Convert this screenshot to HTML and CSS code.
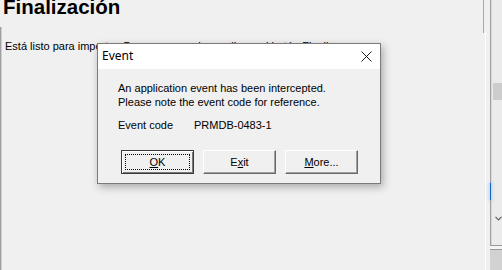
FILE: index.html
```html
<!DOCTYPE html>
<html lang="es">
<head>
<meta charset="utf-8">
<title>Finalización</title>
<link rel="stylesheet" href="styles.css">
</head>
<body>
<div class="screen">
  <div class="main">
    <h1 class="title">Finalización</h1>
    <div class="panel">
      <p class="intro">Está listo para importar. Para empezar, haga clic en el botón Finalizar.</p>
    </div>
  </div>
  <div class="edge">
    <div class="edge-line"></div>
    <div class="edge-gap1"></div>
    <div class="edge-white"></div>
    <div class="edge-gap2"></div>
    <div class="scroll">
      <div class="scroll-track">
        <div class="rail">
          <div class="rail-gray rail-top"></div>
          <div class="rail-blue"></div>
          <div class="rail-gray rail-bottom"></div>
        </div>
        <div class="scroll-inner">
          <div class="thumb"></div>
          <svg class="chev" width="7" height="5" viewBox="0 0 7 5"><path d="M0.5 0.8 L3.5 3.8 L6.5 0.8" fill="none" stroke="#606060" stroke-width="1.2"/></svg>
        </div>
      </div>
      <div class="scroll-foot"></div>
    </div>
  </div>

  <div class="dialog" role="dialog" aria-label="Event">
    <div class="dlg-title">
      <span class="dlg-caption">Event</span>
      <svg class="close" width="11" height="11" viewBox="0 0 11 11"><path d="M0.5 0.5 L10.5 10.5 M10.5 0.5 L0.5 10.5" stroke="#1a1a1a" stroke-width="1" fill="none"/></svg>
    </div>
    <div class="dlg-body">
      <p class="msg">An application event has been intercepted.<br>Please note the event code for reference.</p>
      <div class="code-row"><span class="code-label">Event code</span><span class="code-value">PRMDB-0483-1</span></div>
      <div class="buttons">
        <button class="btn btn-default"><span class="focus"><u>O</u>K</span></button>
        <button class="btn"><span class="btn-label">E<u>x</u>it</span></button>
        <button class="btn"><span class="btn-label"><u>M</u>ore...</span></button>
      </div>
    </div>
  </div>
</div>
</body>
</html>
```

FILE: styles.css
```css
html, body {
  margin: 0;
  padding: 0;
}
body {
  background: #f0f0f0;
  font-family: "Liberation Sans", Arial, sans-serif;
  color: #000;
}
.screen {
  position: relative;
  width: 502px;
  height: 270px;
  overflow: hidden;
  display: flex;
  background: #f0f0f0;
}
.main {
  width: 483px;
  display: flex;
  flex-direction: column;
}
.title {
  margin: -3px 0 0 0;
  padding-left: 3px;
  font-size: 20.5px;
  line-height: 20px;
  font-weight: bold;
  height: 30px;
}
.panel {
  flex: 1;
  border-left: 1px solid #a0a0a0;
  box-shadow: inset 1px 0 #cfcfcf;
  padding: 12px 0 0 4px;
}
.intro {
  margin: 0;
  font-size: 11px;
  line-height: 14px;
  white-space: nowrap;
}

/* right edge decoration */
.edge {
  width: 19px;
  display: flex;
}
.edge-line {
  width: 1px;
  height: 33px;
  background: #a8a8a8;
}
.edge-gap1 { width: 1px; }
.edge-white {
  width: 1px;
  margin-top: 31px;
  background: #ffffff;
}
.edge-gap2 { width: 4px; }
.scroll {
  width: 12px;
  display: flex;
  flex-direction: column;
}
.scroll-track {
  height: 245px;
  display: flex;
  background: #ebebeb;
}
.rail {
  width: 1px;
  display: flex;
  flex-direction: column;
}
.rail-gray { background: #a0a0a0; }
.rail-top { height: 183px; }
.rail-blue {
  height: 17px;
  background: #1565c0;
  box-shadow: 0 0 3px 1px rgba(80, 160, 240, 0.35);
}
.rail-bottom { flex: 1; }
.scroll-inner {
  flex: 1;
  display: flex;
  flex-direction: column;
  border-left: 1px solid #d8d8d8;
}
.thumb {
  margin: 83px 0 0 1px;
  height: 17px;
  background: #cdcdcd;
}
.chev {
  margin: 116px 0 0 3px;
}
.scroll-foot {
  flex: 1;
  border-top: 1px solid #9a9a9a;
  background: linear-gradient(#f4f4f4 0, #f4f4f4 3px, #9a9a9a 3px, #9a9a9a 4px, #d2d2d2 4px);
}

/* dialog */
.dialog {
  position: absolute;
  left: 97px;
  top: 43px;
  width: 284px;
  height: 141px;
  box-sizing: border-box;
  border: 1px solid #7a7a7a;
  background: #f0f0f0;
  box-shadow: 2px 3px 8px rgba(0, 0, 0, 0.3);
  display: flex;
  flex-direction: column;
}
.dlg-title {
  height: 25px;
  background: #ffffff;
  display: flex;
  align-items: center;
  justify-content: space-between;
  padding: 0 8px 0 4px;
}
.dlg-caption {
  font-family: "Noto Sans", "Open Sans", sans-serif;
  font-size: 12px;
  line-height: 14px;
  margin-top: -2px;
}
.dlg-body {
  flex: 1;
  padding: 12px 0 0 20px;
  font-size: 11px;
  line-height: 14px;
}
.msg {
  margin: 0;
}
.code-row {
  margin-top: 9px;
  display: flex;
}
.code-label {
  width: 76px;
}
.buttons {
  margin: 18px 0 0 3px;
  display: flex;
  gap: 9px;
}
.btn {
  width: 73px;
  height: 24px;
  box-sizing: border-box;
  padding: 0;
  margin: 0;
  font-family: "Liberation Sans", Arial, sans-serif;
  font-size: 11px;
  color: #000;
  background: #f0f0f0;
  border: 1px solid;
  border-color: #ffffff #696969 #696969 #ffffff;
  box-shadow: inset -1px -1px #a0a0a0;
  display: flex;
  align-items: center;
  justify-content: center;
}
.btn u {
  text-decoration-thickness: 1px;
  text-underline-offset: 1px;
}
.btn-default {
  border-color: #3a3a3a;
  box-shadow: inset 1px 1px #ffffff, inset -1px -1px #7a7a7a;
  padding: 3px;
  align-items: stretch;
}
.focus {
  flex: 1;
  border: 1px dotted #000;
  display: flex;
  align-items: center;
  justify-content: center;
}
```
